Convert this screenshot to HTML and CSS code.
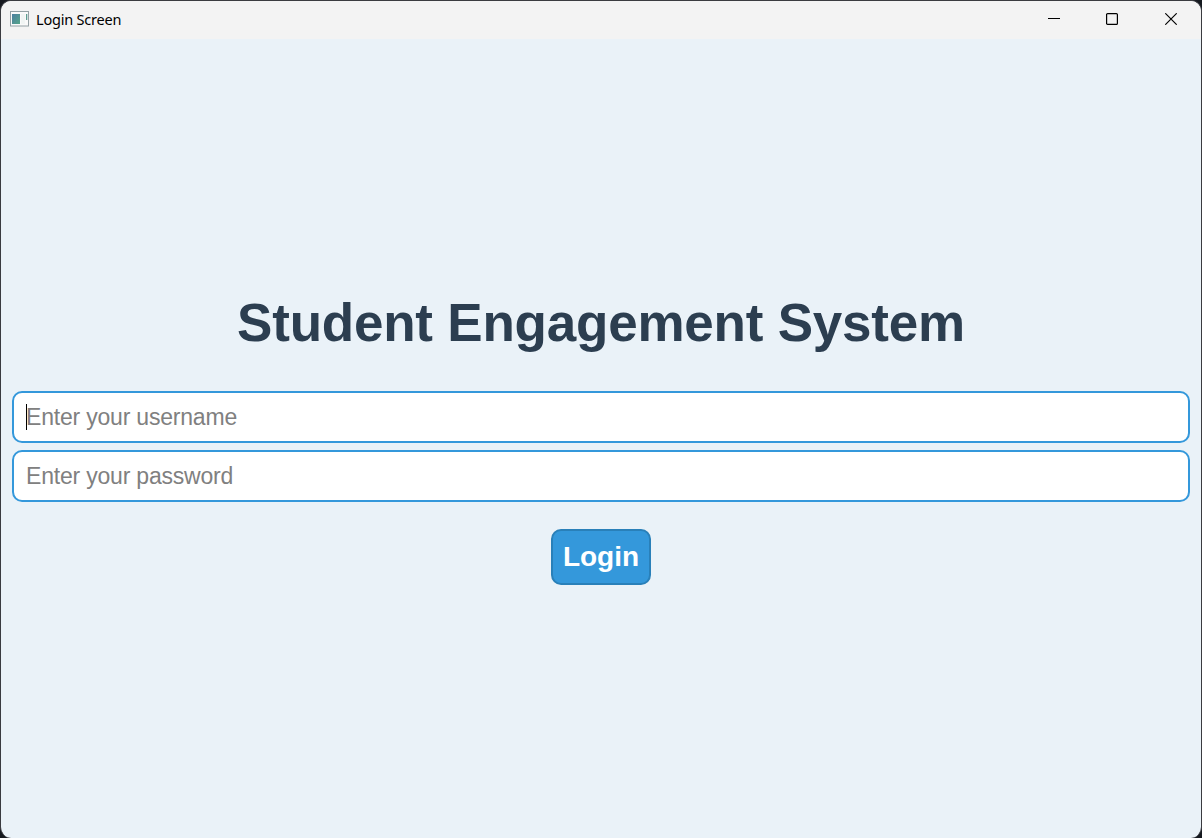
FILE: index.html
```html
<!DOCTYPE html>
<html lang="en">
<head>
<meta charset="utf-8">
<title>Login Screen</title>
<link rel="stylesheet" href="styles.css">
</head>
<body>
<div class="window">
  <header class="titlebar">
    <svg class="app-icon" width="19" height="16" viewBox="0 0 19 16">
      <defs><linearGradient id="pane" x1="0" y1="0" x2="1" y2="1"><stop offset="0" stop-color="#4d7fa0"/><stop offset="1" stop-color="#56a58a"/></linearGradient></defs>
      <rect x=".5" y=".5" width="18" height="14.5" fill="#fafafa" stroke="#94a1a5"/>
      <rect x="2" y="3" width="8" height="10" fill="url(#pane)"/>
      <rect x="11" y="3" width="4" height="10" fill="#f1f5f4"/>
      <rect x="16" y="3" width="1.3" height="6" fill="#5e9d91"/>
    </svg>
    <span class="caption">Login Screen</span>
    <div class="controls">
      <svg width="12" height="12" viewBox="0 0 12 12"><path d="M0 5.5h12" stroke="#000" fill="none"/></svg>
      <svg width="12" height="12" viewBox="0 0 12 12"><rect x=".6" y=".6" width="10.8" height="10.8" rx="1" stroke="#000" stroke-width="1.2" fill="none"/></svg>
      <svg width="12" height="12" viewBox="0 0 12 12"><path d="M.3.3l11.4 11.4M11.7.3L.3 11.7" stroke="#000" stroke-width="1.15" fill="none"/></svg>
    </div>
  </header>
  <main class="content">
    <h1 class="heading">Student Engagement System</h1>
    <div class="field"><span class="caret"></span><span class="placeholder">Enter your username</span></div>
    <div class="field"><span class="placeholder">Enter your password</span></div>
    <button class="login">Login</button>
  </main>
</div>
</body>
</html>
```
FILE: styles.css
```css
* { box-sizing: border-box; }
body { margin: 0; background: #15191f; }
.window {
  width: 1202px;
  height: 838px;
  display: flex;
  flex-direction: column;
  border: 1px solid #3a3b40;
  border-bottom: 0;
  border-radius: 11px;
  background: #eaf2f8;
  overflow: hidden;
}
.titlebar {
  height: 38px;
  flex: none;
  display: flex;
  align-items: center;
  background: #f3f3f3;
  padding: 0 24px 2px 9px;
}
.app-icon { display: block; }
.caption {
  margin-left: 7px;
  padding-bottom: 1px;
  font: 14.5px/20px "Noto Sans", sans-serif;
  letter-spacing: -0.2px;
  color: #000;
}
.controls { margin-left: auto; display: flex; }
.controls svg { display: block; margin-left: 47px; }
.controls svg:nth-child(2) { margin-left: 46px; }
.content {
  flex: 1;
  display: flex;
  flex-direction: column;
  padding: 253px 11px 0;
  font-family: "Liberation Sans", Arial, sans-serif;
}
.heading {
  margin: 0 0 37px;
  text-align: center;
  font-size: 53px;
  line-height: 62px;
  font-weight: 700;
  letter-spacing: -0.22px;
  color: #2c3e50;
}
.field {
  position: relative;
  height: 52px;
  flex: none;
  display: flex;
  align-items: center;
  margin-bottom: 7px;
  padding-left: 12px;
  border: 2px solid #3498db;
  border-radius: 10px;
  background: #fff;
}
.placeholder { font-size: 23px; line-height: 28px; letter-spacing: -0.2px; color: #808080; }
.caret { position: absolute; left: 12px; top: 11px; width: 1px; height: 26px; background: #000; }
.login {
  align-self: center;
  width: 100px;
  height: 56px;
  margin-top: 20px;
  padding: 0;
  border: 2px solid #2980b9;
  border-radius: 10px;
  background: #3498db;
  color: #fff;
  font: 700 28px/32px "Liberation Sans", Arial, sans-serif;
}
```
